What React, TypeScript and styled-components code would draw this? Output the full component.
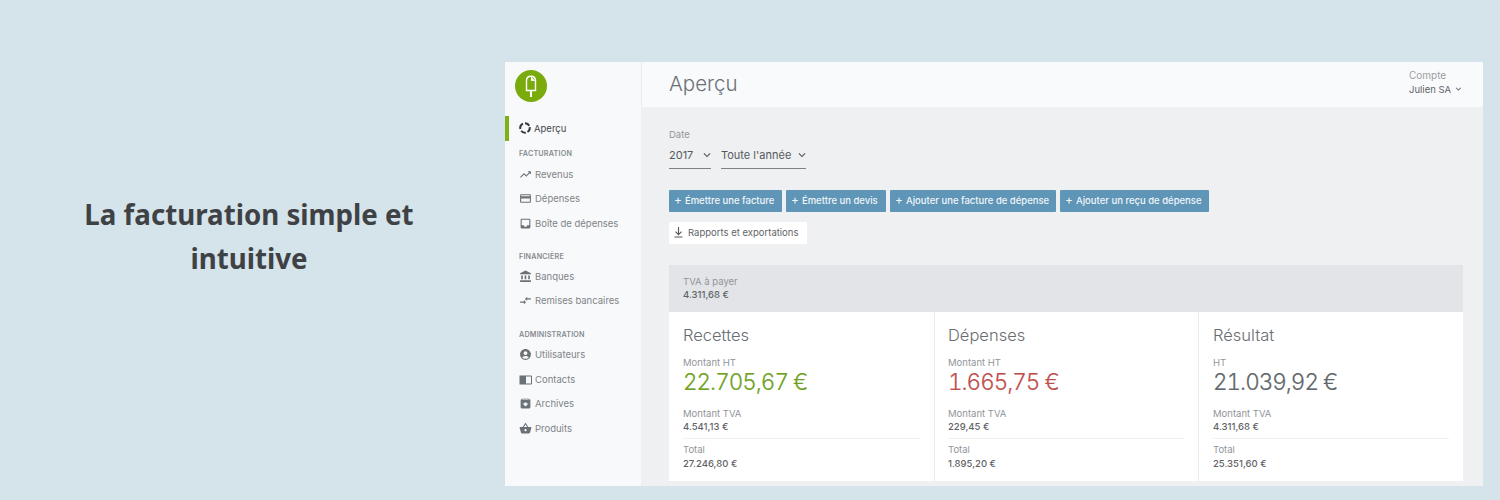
import React from "react";
import styled, { createGlobalStyle } from "styled-components";
import {
  MdTrendingUp, MdCreditCard, MdInbox, MdAccountBalance, MdCompareArrows,
  MdAccountCircle, MdArchive, MdShoppingBasket,
  MdKeyboardArrowDown,
} from "react-icons/md";

const Global = createGlobalStyle`
  html, body { margin: 0; padding: 0; background: #d5e3ea; }
  * { box-sizing: border-box; }
`;

const Page = styled.div`
  width: 1500px; height: 500px; display: flex; overflow: hidden;
  background: #d5e3ea; font-family: Inter, "Liberation Sans", sans-serif;
`;
const Intro = styled.div`
  width: 505px; padding: 192px 0 0 0; flex: none;
`;
const Headline = styled.h1`
  width: 498px; margin: 0; text-align: center;
  font: 700 27.7px/44px "Noto Sans", sans-serif; color: #3f4245;
`;
const Win = styled.div`
  width: 978px; height: 424px; margin-top: 62px; display: flex; flex: none; overflow: hidden;
`;
const Side = styled.aside`
  width: 137px; flex: none; background: #f8f9fb; border-right: 1px solid #eceef1; padding-top: 8px;
`;
const Logo = styled.div`
  margin-left: 10px; width: 32px; height: 32px; margin-bottom: 14px;
  svg { display: block; }
`;
const NavItem = styled.div<{ $active?: boolean }>`
  height: 24.5px; display: flex; align-items: center; gap: 3px;
  font-size: 9.5px; color: ${p => p.$active ? "#44484c" : "#7f8488"};
  border-left: ${p => p.$active ? "4px solid #7fb015" : "none"};
  padding-left: ${p => p.$active ? "10px" : "14px"};
  svg { flex: none; color: ${p => p.$active ? "#33373a" : "#6c7175"}; }
`;
const GroupLabel = styled.div<{ $gap: number; $after: number }>`
  margin-top: ${p => p.$gap}px; margin-bottom: ${p => p.$after}px; padding-left: 14px; height: 12px; line-height: 12px;
  font-size: 7.2px; font-weight: 600; letter-spacing: 0.2px; color: #868b8f;
`;
const Main = styled.main`
  flex: 1; display: flex; flex-direction: column; background: #eef0f2;
`;
const Header = styled.header`
  height: 45px; flex: none; background: #f9fafc; display: flex; justify-content: space-between;
  padding: 0 19px 0 27px; align-items: center;
`;
const Title = styled.div`
  font-size: 20.5px; font-weight: 300; color: #6b7074; margin-top: -3px;
`;
const Account = styled.div`
  width: 55px; font-size: 10px; color: #9a9ea2; line-height: 13px; margin-top: -4px;
`;
const AccountName = styled.div`
  display: flex; align-items: center; gap: 2px; font-size: 9.5px; color: #5f6468; white-space: nowrap;
`;
const Content = styled.div`
  padding: 22px 20px 0 27px; flex: 1; display: flex; flex-direction: column;
`;
const DateLabel = styled.div`
  font-size: 9.5px; color: #93979b; line-height: 12px;
`;
const Selects = styled.div`
  display: flex; gap: 10px; margin-top: 3px;
`;
const Select = styled.div<{ $w: number }>`
  width: ${p => p.$w}px; height: 25px; border-bottom: 1px solid #7d8185; padding-bottom: 2px;
  display: flex; justify-content: space-between; align-items: center;
  font-size: 11px; color: #55595d;
  svg { margin-right: -3px; }
`;
const Actions = styled.div`
  display: flex; gap: 4px; margin-top: 21px;
`;
const Primary = styled.div<{ $w: number }>`
  width: ${p => p.$w}px; height: 22px; border-radius: 1px; background: #5f95b7; color: #f1f6f9;
  font-size: 9.5px; font-weight: 500; line-height: 20px; padding-left: 5px; white-space: nowrap;
`;
const Plus = styled.span`
  font-size: 12px; margin-right: 3px; font-weight: 400;
`;
const Secondary = styled.div`
  width: 138px; height: 22px; background: #fff; margin-top: 10px; display: flex; align-items: center;
  gap: 4px; padding: 0 0 2px 4px; font-size: 9.5px; color: #5f6468; white-space: nowrap;
  border-radius: 1px;
`;
const Tax = styled.div`
  margin-top: 21px; height: 47px; background: #e2e4e7; padding: 10px 14px 0;
`;
const Label = styled.div`
  font-size: 9.5px; color: #919599; line-height: 13px;
`;
const Amount = styled.div`
  font-size: 9.5px; font-weight: 500; color: #5f6468; line-height: 13px;
`;
const Cards = styled.div`
  height: 169px; display: grid; grid-template-columns: 266px 264px 264px; background: #fff;
`;
const Card = styled.section<{ $last?: boolean; $left: number }>`
  padding: 12px 14px 0 ${p => p.$left}px; border-right: ${p => p.$last ? "none" : "1px solid #e8eaec"};
`;
const CardTitle = styled.h2`
  margin: 0 0 10px; font-size: 16.5px; font-weight: 300; line-height: 22px; color: #686d71;
`;
const Big = styled.div<{ $c: string }>`
  font-size: 22.5px; font-weight: 300; line-height: 26px; letter-spacing: -1px; color: ${p => p.$c};
  font-variant-numeric: tabular-nums;
  margin: 0 0 12px; -webkit-text-stroke: 0.2px ${p => p.$c};
`;
const Total = styled.div`
  margin-top: 5px; padding-top: 4px; border-top: 1px solid #eff0f2;
  ${Amount} { margin-top: 1px; }
`;

const Ring = () => (
  <svg width="12" height="12" viewBox="0 0 12 12" fill="none" stroke="currentColor" strokeWidth="2">
    <path d="M6 1.2a4.800 4.800 0 0 1 4.200 2.500" />
    <path d="M10.700 5.200a4.800 4.800 0 0 1-2.200 4.800" />
    <path d="M6.800 10.800a4.800 4.800 0 0 1-4.600-2" />
    <path d="M1.400 7a4.800 4.800 0 0 1 2.600-5.400" />
  </svg>
);

const Popsicle = () => (
  <svg width="32" height="32" viewBox="0 0 32 32">
    <circle cx="16" cy="16" r="16" fill="#79ab0c" />
    <path d="M11.500 11c0-2.800 1.800-4.700 4.500-4.700s4.500 1.900 4.500 4.700v9.500h-9z" fill="none" stroke="#fff" strokeWidth="1.400" />
    <path d="M16 6.500l4.500 4.500h-4.500z" fill="#fff" />
    <rect x="15" y="20.500" width="2" height="6.500" fill="#fff" />
  </svg>
);

const BookIcon = ({ size }: { size: number }) => (
  <svg width={size} height={size} viewBox="0 0 13 13">
    <path d="M0.500 2.500h6.500v9h-6.500z" fill="currentColor" />
    <path d="M7 3h5.500v8h-5.500" fill="none" stroke="currentColor" strokeWidth="1" />
  </svg>
);

const DownloadIcon = () => (
  <svg width="11" height="12" viewBox="0 0 11 12" fill="none" stroke="#55595d" strokeWidth="1.100">
    <path d="M5.500 1v7.500M2.500 5.700l3 3 3-3M1.500 11h8" />
  </svg>
);

const nav1 = [
  { t: "Revenus", I: MdTrendingUp },
  { t: "Dépenses", I: MdCreditCard },
  { t: "Boîte de dépenses", I: MdInbox },
];
const nav2 = [
  { t: "Banques", I: MdAccountBalance },
  { t: "Remises bancaires", I: MdCompareArrows },
];
const nav3 = [
  { t: "Utilisateurs", I: MdAccountCircle },
  { t: "Contacts", I: BookIcon },
  { t: "Archives", I: MdArchive },
  { t: "Produits", I: MdShoppingBasket },
];

type NavEntry = { t: string; I: React.ComponentType<{ size: number }> };
const NavList = ({ items }: { items: NavEntry[] }) => (
  <>
    {items.map(({ t, I }) => (
      <NavItem key={t}><I size={13} />{t}</NavItem>
    ))}
  </>
);

const cards = [
  { title: "Recettes", l: "Montant HT", v: "22.705,67 €", c: "#6fa11f", tva: "4.541,13 €", tot: "27.246,80 €", left: 14 },
  { title: "Dépenses", l: "Montant HT", v: "1.665,75 €", c: "#c0504f", tva: "229,45 €", tot: "1.895,20 €", left: 13 },
  { title: "Résultat", l: "HT", v: "21.039,92 €", c: "#62676b", tva: "4.311,68 €", tot: "25.351,60 €", left: 14 },
];

const buttons: [string, number][] = [
  ["Émettre une facture", 113],
  ["Émettre un devis", 100],
  ["Ajouter une facture de dépense", 166],
  ["Ajouter un reçu de dépense", 149],
];

export default function App() {
  return (
    <Page>
      <Global />
      <Intro>
        <Headline>La facturation simple et<br />intuitive</Headline>
      </Intro>
      <Win>
        <Side>
          <Logo><Popsicle /></Logo>
          <NavItem $active><Ring />Aperçu</NavItem>
          <GroupLabel $gap={7} $after={2.5}>FACTURATION</GroupLabel>
          <NavList items={nav1} />
          <GroupLabel $gap={15} $after={1.5}>FINANCIÈRE</GroupLabel>
          <NavList items={nav2} />
          <GroupLabel $gap={16} $after={1.5}>ADMINISTRATION</GroupLabel>
          <NavList items={nav3} />
        </Side>
        <Main>
          <Header>
            <Title>Aperçu</Title>
            <Account>
              Compte
              <AccountName>Julien SA <MdKeyboardArrowDown size={14} /></AccountName>
            </Account>
          </Header>
          <Content>
            <DateLabel>Date</DateLabel>
            <Selects>
              <Select $w={42}>2017 <MdKeyboardArrowDown size={14} /></Select>
              <Select $w={85}>Toute l'année <MdKeyboardArrowDown size={14} /></Select>
            </Selects>
            <Actions>
              {buttons.map(([t, w]) => (
                <Primary key={t} $w={w}><Plus>+</Plus>{t}</Primary>
              ))}
            </Actions>
            <Secondary><DownloadIcon />Rapports et exportations</Secondary>
            <Tax>
              <Label>TVA à payer</Label>
              <Amount>4.311,68 €</Amount>
            </Tax>
            <Cards>
              {cards.map((c, i) => (
                <Card key={c.title} $last={i === 2} $left={c.left}>
                  <CardTitle>{c.title}</CardTitle>
                  <Label>{c.l}</Label>
                  <Big $c={c.c}>{c.v}</Big>
                  <Label>Montant TVA</Label>
                  <Amount>{c.tva}</Amount>
                  <Total>
                    <Label>Total</Label>
                    <Amount>{c.tot}</Amount>
                  </Total>
                </Card>
              ))}
            </Cards>
          </Content>
        </Main>
      </Win>
    </Page>
  );
}
